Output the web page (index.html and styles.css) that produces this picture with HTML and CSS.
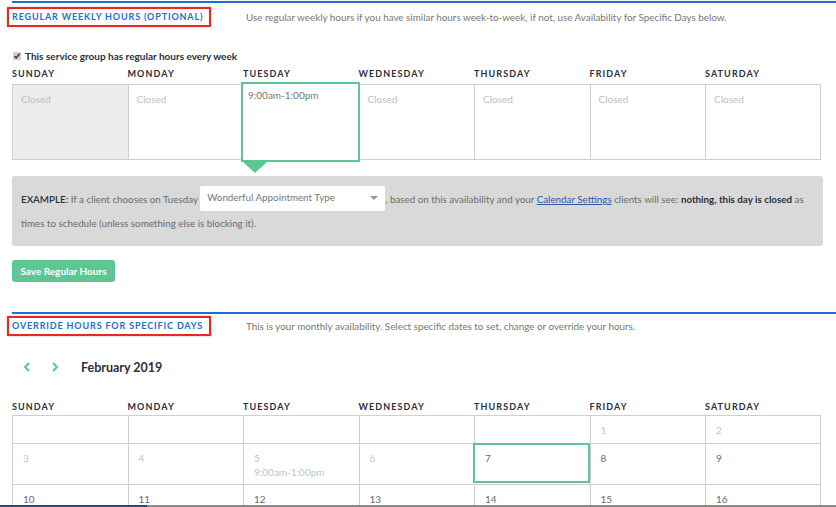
FILE: index.html
```html
<!DOCTYPE html>
<html lang="en">
<head>
<meta charset="utf-8">
<title>Availability</title>
<link rel="stylesheet" href="styles.css">
</head>
<body>
<section class="section first">
  <div class="sec-head">
    <div class="sec-title-col"><h2 class="sec-title">Regular Weekly Hours (Optional)</h2></div>
    <p class="sec-desc">Use regular weekly hours if you have similar hours week-to-week, if not, use Availability for Specific Days below.</p>
  </div>

  <div class="check-row">
    <span class="checkbox"><svg viewBox="0 0 8 8" width="8" height="8"><path d="M1.5 4.2 L3.2 6 L6.6 1.8" fill="none" stroke="#333" stroke-width="1.4"/></svg></span>
    <span class="check-label">This service group has regular hours every week</span>
  </div>

  <div class="week">
    <div class="dow">Sunday</div>
    <div class="dow">Monday</div>
    <div class="dow">Tuesday</div>
    <div class="dow">Wednesday</div>
    <div class="dow">Thursday</div>
    <div class="dow">Friday</div>
    <div class="dow">Saturday</div>

    <div class="wcell off">Closed</div>
    <div class="wcell">Closed</div>
    <div class="wcell active"><span class="hours">9:00am-1:00pm</span><span class="pointer"></span></div>
    <div class="wcell">Closed</div>
    <div class="wcell">Closed</div>
    <div class="wcell">Closed</div>
    <div class="wcell last">Closed</div>
  </div>

  <div class="example">
    <span class="ex-label">EXAMPLE:</span> <span>If a client chooses on Tuesday</span>
    <span class="select">Wonderful Appointment Type<span class="caret"></span></span><span>, based on this availability and your</span> <a class="link" href="#">Calendar Settings</a> <span>clients will see:</span> <b class="strong">nothing, this day is closed</b> <span>as</span> <span>times to schedule (unless something else is blocking it).</span>
  </div>

  <button class="save" type="button">Save Regular Hours</button>
</section>

<section class="section second">
  <div class="sec-head">
    <div class="sec-title-col"><h2 class="sec-title">Override Hours for Specific Days</h2></div>
    <p class="sec-desc">This is your monthly availability. Select specific dates to set, change or override your hours.</p>
  </div>

  <div class="month-nav">
    <span class="chev"><svg viewBox="0 0 8 10" width="8" height="10"><path d="M6 1 L2 5 L6 9" fill="none" stroke="#5ec595" stroke-width="2"/></svg></span>
    <span class="chev"><svg viewBox="0 0 8 10" width="8" height="10"><path d="M2 1 L6 5 L2 9" fill="none" stroke="#5ec595" stroke-width="2"/></svg></span>
    <span class="month-title">February 2019</span>
  </div>

  <div class="month">
    <div class="dow">Sunday</div>
    <div class="dow">Monday</div>
    <div class="dow">Tuesday</div>
    <div class="dow">Wednesday</div>
    <div class="dow">Thursday</div>
    <div class="dow">Friday</div>
    <div class="dow">Saturday</div>

    <div class="mcell r1"></div>
    <div class="mcell r1"></div>
    <div class="mcell r1"></div>
    <div class="mcell r1"></div>
    <div class="mcell r1"></div>
    <div class="mcell r1 past">1</div>
    <div class="mcell r1 past">2</div>

    <div class="mcell past">3</div>
    <div class="mcell past">4</div>
    <div class="mcell past">5<span class="mhours">9:00am-1:00pm</span></div>
    <div class="mcell past">6</div>
    <div class="mcell today">7</div>
    <div class="mcell">8</div>
    <div class="mcell">9</div>

    <div class="mcell">10</div>
    <div class="mcell">11</div>
    <div class="mcell">12</div>
    <div class="mcell">13</div>
    <div class="mcell">14</div>
    <div class="mcell">15</div>
    <div class="mcell">16</div>
  </div>
</section>
<div class="window-edge"></div>
</body>
</html>
```

FILE: styles.css
```css
* { box-sizing: border-box; }

html, body {
  margin: 0;
  padding: 0;
  background: #fff;
  overflow: hidden;
  height: 100%;
}

body {
  font-family: Lato, "Open Sans", "Liberation Sans", sans-serif;
  font-size: 10px;
  color: #777;
}

.section {
  margin-left: 12px;
  border-top: 2px solid #1b6fd1;
}

.section.first { margin-top: 1px; }
.section.second { margin-top: 30px; }

.sec-head {
  display: flex;
  align-items: center;
  height: 20px;
}

.first .sec-head { margin-top: 4px; }
.second .sec-head { margin-top: 2px; }

.sec-title-col {
  width: 234px;
  flex: none;
  display: flex;
}

.sec-title {
  margin: 0 0 0 -5px;
  padding: 0 6px 0 3px;
  height: 20px;
  line-height: 16px;
  border: 2px solid #e8291c;
  box-shadow: 0 0 2px rgba(0,0,0,0.25);
  font-size: 9px;
  font-weight: 700;
  letter-spacing: 0.85px;
  text-transform: uppercase;
  color: #1b6fd1;
  white-space: nowrap;
}

.sec-desc {
  margin: 0;
  font-size: 9.85px;
  color: #777;
  white-space: nowrap;
}

.check-row {
  display: flex;
  align-items: center;
  margin-top: 23px;
  height: 12px;
  gap: 4px;
  padding-left: 1px;
}

.checkbox {
  width: 8px;
  height: 8px;
  background: #cfcfcf;
  border-radius: 1px;
  display: flex;
}

.check-label {
  font-weight: 700;
  font-size: 10px;
  color: #2b2f3a;
}

.week, .month {
  display: grid;
  grid-template-columns: repeat(7, 115.5px);
  width: 809px;
}

.week { margin-top: 6px; }

.dow {
  font-size: 9px;
  font-weight: 700;
  letter-spacing: 1.1px;
  text-transform: uppercase;
  color: #2b2f3a;
  height: 12px;
  line-height: 12px;
}

.week .dow { margin-bottom: 4px; }

.wcell {
  position: relative;
  height: 76px;
  border: 1px solid #cfcfcf;
  border-right: none;
  padding: 8px 8px;
  color: #c0c0c0;
  font-size: 10px;
}

.wcell.last { border-right: 1px solid #cfcfcf; }
.wcell.off { background: #ececec; }

.wcell.active {
  border: 2px solid #5ec595;
  margin: -2px -1px -2px -2px;
  height: 80px;
  padding: 5px 5px;
  z-index: 1;
  color: #777;
}

.pointer {
  position: absolute;
  left: 0;
  bottom: -13px;
  width: 0;
  height: 0;
  border-left: 12px solid transparent;
  border-right: 12px solid transparent;
  border-top: 11px solid #5ec595;
}

.example {
  margin-top: 16px;
  width: 811px;
  background: #d9d9d9;
  border-radius: 3px;
  padding: 11px 6px 11px 9px;
  line-height: 24px;
  font-size: 9.8px;
  color: #6b6b6b;
}

.ex-label { color: #2b2f3a; font-weight: 600; }

.select {
  display: inline-block;
  position: relative;
  width: 185px;
  height: 25px;
  line-height: 23px;
  background: #fff;
  border-radius: 2px;
  padding: 0 7px;
  color: #777;
  vertical-align: middle;
  margin-top: -4px;
}

.caret {
  position: absolute;
  right: 7px;
  top: 10px;
  border-left: 4px solid transparent;
  border-right: 4px solid transparent;
  border-top: 4px solid #999;
}

.link { color: #2a5aa8; text-decoration: underline; }
.strong { color: #2b2f3a; font-weight: 700; }

.save {
  display: block;
  margin-top: 14px;
  width: 103px;
  height: 22px;
  border: none;
  border-radius: 3px;
  background: #5ec595;
  color: #fff;
  font-family: inherit;
  font-size: 10px;
  font-weight: 700;
  padding: 0;
}

.month-nav {
  display: flex;
  align-items: center;
  height: 16px;
  margin-top: 23px;
  padding-left: 11px;
}

.chev { display: flex; width: 28px; }

.month-title {
  margin-left: 2px;
  font-size: 12.5px;
  font-weight: 700;
  color: #2b2f3a;
}

.month { margin-top: 26px; }
.month .dow { margin-bottom: 2px; }

.mcell {
  position: relative;
  height: 41px;
  border-left: 1px solid #cfcfcf;
  border-top: 1px solid #cfcfcf;
  padding: 8px 10px;
  color: #6b6b6b;
  font-size: 10px;
  line-height: 12px;
}

.mcell:nth-child(7n) { border-right: 1px solid #cfcfcf; }
.mcell.r1 { height: 28px; padding-top: 8px; }
.mcell.past { color: #c4c4c4; }

.mhours { display: block; margin-top: 2px; }

.mcell.today {
  border: 2px solid #5ec595;
  margin: 0 0 0 -1px;
  padding: 7px 10px;
  height: 40px;
  z-index: 1;
}

.window-edge {
  position: fixed;
  left: 0;
  right: 0;
  bottom: 0;
  height: 2px;
  background: linear-gradient(to right, #2a4a78 0, #2a4a78 147px, #8a8a8a 147px);
}
```
